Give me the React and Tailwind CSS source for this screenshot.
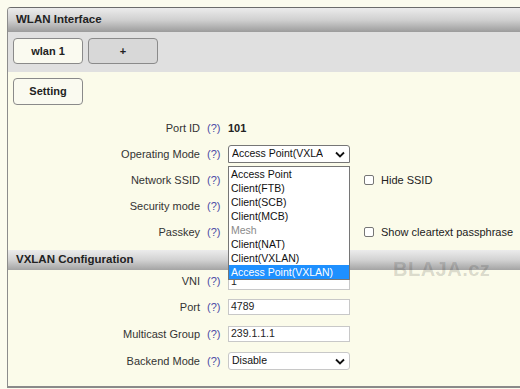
import React from "react";

const Help = () => (
  <span className="ml-[7px] w-[21px] shrink-0 text-[#4b4ba6]">(?)</span>
);

const Chevron = () => (
  <svg width="10" height="7" viewBox="0 0 10 7" className="shrink-0">
    <polyline points="1,1.5 5,5.5 9,1.5" fill="none" stroke="#111" strokeWidth="1.8" />
  </svg>
);

const Row = ({ label, children, h = "h-[26px]" }) => (
  <div className={`flex items-center ${h}`}>
    <div className="w-[192px] shrink-0 text-right text-[#333]">{label}</div>
    <Help />
    <div className="relative flex items-center">{children}</div>
  </div>
);

const TextBox = ({ value = "" }) => (
  <div className="flex h-[16px] w-[122px] items-center border border-[#c8c8c8] bg-white px-[2px] text-[10.5px] text-[#222]">
    {value}
  </div>
);

const Check = ({ label }) => (
  <div className="ml-[14px] flex items-center gap-[7px] whitespace-nowrap text-[#222]">
    <span className="h-[10px] w-[10px] rounded-[2px] border border-[#767676] bg-white" />
    <span>{label}</span>
  </div>
);

const options = [
  "Access Point",
  "Client(FTB)",
  "Client(SCB)",
  "Client(MCB)",
  "Mesh",
  "Client(NAT)",
  "Client(VXLAN)",
  "Access Point(VXLAN)",
];

export default function App() {
  return (
    <div className="h-[389px] overflow-hidden bg-[#fbfbee] pl-[7px] pt-[7px] font-['Liberation_Sans',Arial,sans-serif] text-[11px]">
      <div className="relative w-[520px] rounded-tl-[4px] border-b-2 border-l border-t border-b-[#8a8a8a] border-l-[#8c8c8c] border-t-[#6b6b6b] bg-[#fbfbea]">
        {/* header */}
        <div className="flex h-[24px] items-center rounded-tl-[3px] bg-gradient-to-b from-[#ececec] via-[#d0d0d0] to-[#9c9c9c] pl-[8px] text-[11.5px] font-bold text-[#222]">
          WLAN Interface
        </div>

        {/* tabs */}
        <div className="flex h-[40px] gap-[5px] bg-[#e0e0e0] pl-[5px] pt-[6px]">
          <div className="flex h-[26px] w-[70px] items-center justify-center rounded-[4px] border border-[#8a8a8a] bg-[#fafaf0] font-bold text-[#222]">
            wlan 1
          </div>
          <div className="flex h-[26px] w-[70px] items-center justify-center rounded-[4px] border border-[#8a8a8a] bg-[#d8d8d8] font-bold text-[#222]">
            +
          </div>
        </div>

        {/* body */}
        <div className="pt-[6px]">
          <div className="ml-[5px] flex h-[27px] w-[70px] items-center justify-center rounded-[4px] border border-[#8a8a8a] bg-[#fafaf0] font-bold text-[#222]">
            Setting
          </div>

          <div className="mt-[10px]">
            <Row label="Port ID">
              <span className="font-bold text-[#222]">101</span>
            </Row>
            <Row label="Operating Mode">
              <div className="flex h-[18px] w-[122px] items-center justify-between rounded-t-[3px] border border-[#767676] bg-white pl-[3px] pr-[4px] text-[10.5px] text-[#111]">
                <span className="w-[91px] overflow-hidden whitespace-nowrap">Access Point(VXLAN)</span>
                <Chevron />
              </div>
              <div className="absolute left-0 top-[21px] z-10 w-[122px] border border-[#767676] bg-white text-[10.5px] leading-[14px]">
                {options.map((o, i) => (
                  <div
                    key={o}
                    className={`px-[2px] ${
                      i === options.length - 1
                        ? "bg-[#1e90ff] text-white"
                        : o === "Mesh"
                        ? "text-[#8a8a8a]"
                        : "text-[#111]"
                    }`}
                  >
                    {o}
                  </div>
                ))}
              </div>
            </Row>
            <Row label="Network SSID">
              <TextBox />
              <Check label="Hide SSID" />
            </Row>
            <Row label="Security mode">
              <TextBox />
            </Row>
            <Row label="Passkey">
              <TextBox />
              <Check label="Show cleartext passphrase" />
            </Row>
          </div>

          <div className="mt-[5px] flex h-[20px] items-center bg-gradient-to-b from-[#ececec] via-[#d2d2d2] to-[#a4a4a4] pl-[8px] text-[11.5px] font-bold text-[#222]">
            VXLAN Configuration
          </div>

          <div className="pb-[11px]">
            <Row label="VNI" h="h-[23px]">
              <TextBox value="1" />
            </Row>
            <Row label="Port" h="h-[28px]">
              <TextBox value="4789" />
            </Row>
            <Row label="Multicast Group">
              <TextBox value="239.1.1.1" />
            </Row>
            <Row label="Backend Mode" h="h-[28px]">
              <div className="flex h-[18px] w-[122px] items-center justify-between rounded-[3px] border border-[#c8c8c8] bg-white pl-[3px] pr-[4px] text-[10.5px] text-[#111]">
                <span>Disable</span>
                <Chevron />
              </div>
            </Row>
          </div>
        </div>

        <div className="pointer-events-none absolute left-[385px] top-[246px] text-[20px] font-bold tracking-[0.5px] text-black/15">
          BLAJA.cz
        </div>
      </div>
    </div>
  );
}
